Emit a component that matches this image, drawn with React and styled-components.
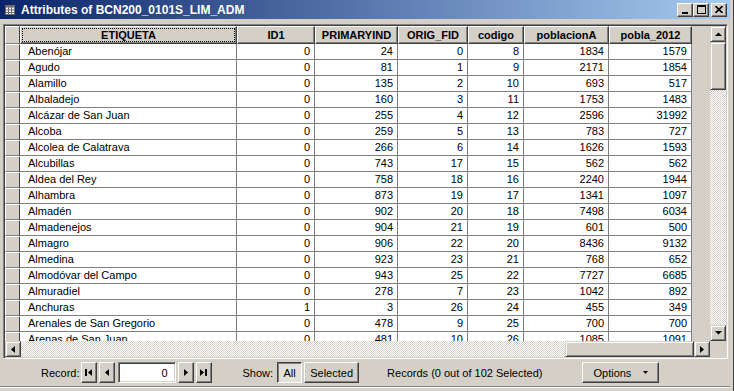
import React from "react"
import styled, { createGlobalStyle } from "styled-components"

const GlobalStyle = createGlobalStyle`
  html, body {
    margin: 0;
    padding: 0;
    background: #d4d0c8;
  }
  body {
    font-family: "Liberation Sans", Arial, sans-serif;
    font-size: 11px;
    color: #000;
  }
`

const columns = [
  { label: "ETIQUETA", width: 217, left: true },
  { label: "ID1", width: 78 },
  { label: "PRIMARYIND", width: 83 },
  { label: "ORIG_FID", width: 70 },
  { label: "codigo", width: 56 },
  { label: "poblacionA", width: 85 },
  { label: "pobla_2012", width: 83 },
]

const rows = [
  ["Abenójar", 0, 24, 0, 8, 1834, 1579],
  ["Agudo", 0, 81, 1, 9, 2171, 1854],
  ["Alamillo", 0, 135, 2, 10, 693, 517],
  ["Albaladejo", 0, 160, 3, 11, 1753, 1483],
  ["Alcázar de San Juan", 0, 255, 4, 12, 2596, 31992],
  ["Alcoba", 0, 259, 5, 13, 783, 727],
  ["Alcolea de Calatrava", 0, 266, 6, 14, 1626, 1593],
  ["Alcubillas", 0, 743, 17, 15, 562, 562],
  ["Aldea del Rey", 0, 758, 18, 16, 2240, 1944],
  ["Alhambra", 0, 873, 19, 17, 1341, 1097],
  ["Almadén", 0, 902, 20, 18, 7498, 6034],
  ["Almadenejos", 0, 904, 21, 19, 601, 500],
  ["Almagro", 0, 906, 22, 20, 8436, 9132],
  ["Almedina", 0, 923, 23, 21, 768, 652],
  ["Almodóvar del Campo", 0, 943, 25, 22, 7727, 6685],
  ["Almuradiel", 0, 278, 7, 23, 1042, 892],
  ["Anchuras", 1, 3, 26, 24, 455, 349],
  ["Arenales de San Gregorio", 0, 478, 9, 25, 700, 700],
  ["Arenas de San Juan", 0, 481, 10, 26, 1085, 1091],
]

const raised = `
  border: 1px solid;
  border-color: #fff #404040 #404040 #fff;
  box-shadow: inset -1px -1px #808080;
`

const Window = styled.div`
  width: 734px;
  height: 391px;
  box-sizing: border-box;
  background: #d4d0c8;
  display: flex;
  flex-direction: column;
  padding-right: 3px;
  border-right: 1px solid #404040;
  overflow: hidden;
`

const TitleBar = styled.div`
  height: 19px;
  flex: none;
  display: flex;
  align-items: center;
  padding: 0 3px 0 5px;
  background: linear-gradient(to right, #0a246a, #a6caf0);
  color: #fff;
  font-weight: bold;
  font-size: 12px;
`

const Title = styled.span`
  margin-left: 6px;
  flex: 1;
  white-space: nowrap;
`

const CaptionButton = styled.div`
  width: 16px;
  height: 14px;
  box-sizing: border-box;
  background: #d4d0c8;
  ${raised}
  display: flex;
  align-items: center;
  justify-content: center;
  margin-left: ${(p) => (p.$gap ? "2px" : "0")};
`

const Frame = styled.div`
  margin: 5px 2px 0 3px;
  height: 335px;
  box-sizing: border-box;
  flex: none;
  border: 1px solid;
  border-color: #808080 #fff #fff #808080;
  padding: 1px;
  box-shadow: inset 1px 1px #404040, inset -1px -1px #d4d0c8;
  display: grid;
  grid-template-columns: 1fr 16px;
  grid-template-rows: 1fr 16px;
`

const Viewport = styled.div`
  overflow: hidden;
  background: #d4d0c8;
`

const Row = styled.div`
  display: flex;
  height: ${(p) => (p.$header ? "18px" : "16px")};
`

const Selector = styled.div`
  width: 15px;
  flex: none;
  box-sizing: border-box;
  background: #d4d0c8;
  border: 1px solid;
  border-color: #fff #808080 #808080 #fff;
  border-right-color: #404040;
`

const HeaderCell = styled.div`
  flex: none;
  box-sizing: border-box;
  background: #d4d0c8;
  ${raised}
  font-weight: bold;
  display: flex;
  align-items: center;
  justify-content: center;
  padding: 1px;
`

const Focus = styled.div`
  width: 100%;
  height: 100%;
  box-sizing: border-box;
  border: 1px dotted #000;
  display: flex;
  align-items: center;
  justify-content: center;
`

const Cell = styled.div`
  flex: none;
  box-sizing: border-box;
  background: #fff;
  border-right: 1px solid #808080;
  border-bottom: 1px solid #808080;
  line-height: 15px;
  white-space: nowrap;
  overflow: hidden;
  text-align: ${(p) => (p.$left ? "left" : "right")};
  padding: ${(p) => (p.$left ? "0 4px 0 8px" : "0 4px")};
`

const VScroll = styled.div`
  display: flex;
  flex-direction: column;
`

const HScroll = styled.div`
  display: flex;
`

const Track = styled.div`
  flex: 1;
  background: repeating-conic-gradient(#fff 0 25%, #d4d0c8 0 50%) 0 0 / 2px 2px;
`

const ScrollButton = styled.div`
  width: 16px;
  height: 16px;
  flex: none;
  box-sizing: border-box;
  background: #d4d0c8;
  border: 1px solid;
  border-color: #d4d0c8 #404040 #404040 #d4d0c8;
  box-shadow: inset 1px 1px #fff, inset -1px -1px #808080;
  display: flex;
  align-items: center;
  justify-content: center;
`

const Thumb = styled(ScrollButton)`
  width: ${(p) => p.$w || 16}px;
  height: ${(p) => p.$h || 16}px;
`

const Corner = styled.div`
  background: #d4d0c8;
`

const Toolbar = styled.div`
  height: 27px;
  flex: none;
  display: flex;
  align-items: center;
  padding-left: 41px;
  border-bottom: 1px solid #808080;
  box-shadow: 0 1px #fff;
  font-size: 11px;
`

const Label = styled.span`
  margin-left: ${(p) => p.$ml || 0}px;
  margin-right: ${(p) => p.$mr || 0}px;
  white-space: nowrap;
`

const Button = styled.div`
  height: 21px;
  width: ${(p) => p.$w}px;
  margin-left: ${(p) => p.$ml || 0}px;
  flex: none;
  box-sizing: border-box;
  background: ${(p) => (p.$pressed ? "#e3e0da" : "#d4d0c8")};
  border: 1px solid;
  border-color: ${(p) =>
    p.$pressed ? "#404040 #fff #fff #404040" : "#fff #404040 #404040 #fff"};
  box-shadow: ${(p) =>
    p.$pressed ? "inset 1px 1px #808080" : "inset -1px -1px #808080"};
  display: flex;
  align-items: center;
  justify-content: center;
  gap: 12px;
  white-space: nowrap;
`

const RecordInput = styled.div`
  width: 58px;
  height: 21px;
  margin-left: 3px;
  flex: none;
  box-sizing: border-box;
  background: #fff;
  border: 1px solid;
  border-color: #808080 #fff #fff #808080;
  box-shadow: inset 1px 1px #404040, inset -1px -1px #d4d0c8;
  display: flex;
  align-items: center;
  justify-content: flex-end;
  padding-right: 7px;
`

const Tri = ({ dir, bar }) => {
  const shapes = {
    up: "M0 4 L3.5 0.5 L7 4 Z",
    down: "M0 0 L7 0 L3.5 3.5 Z",
  }
  if (dir === "up" || dir === "down") {
    return (
      <svg width="7" height="4" viewBox="0 0 7 4">
        <path d={shapes[dir]} fill="#000" />
      </svg>
    )
  }
  const left = dir === "left"
  return (
    <svg width={bar ? 7 : 4} height="7" viewBox={`0 0 ${bar ? 7 : 4} 7`}>
      {left ? (
        <>
          {bar && <rect x="0" y="0" width="2" height="7" fill="#000" />}
          <path d={`M${bar ? 7 : 4} 0 L${bar ? 3 : 0} 3.5 L${bar ? 7 : 4} 7 Z`} fill="#000" />
        </>
      ) : (
        <>
          <path d="M0 0 L4 3.5 L0 7 Z" fill="#000" />
          {bar && <rect x="5" y="0" width="2" height="7" fill="#000" />}
        </>
      )}
    </svg>
  )
}

const TableIcon = () => (
  <svg width="10" height="10" viewBox="0 0 10 10">
    <rect x="0.5" y="0.5" width="9" height="9" fill="#fff" stroke="#6b6b6b" />
    <rect x="0.5" y="0.5" width="9" height="2" fill="#6b6b6b" />
    <path d="M0.5 5 H9.5 M0.5 7.5 H9.5 M3.5 0.5 V9.5 M6.5 0.5 V9.5" stroke="#6b6b6b" strokeWidth="1" />
  </svg>
)

const App = () => {
  return (
    <>
      <GlobalStyle />
      <Window>
        <TitleBar>
          <TableIcon />
          <Title>Attributes of BCN200_0101S_LIM_ADM</Title>
          <CaptionButton>
            <svg width="8" height="8" viewBox="0 0 8 8">
              <rect x="1" y="6" width="6" height="2" fill="#000" />
            </svg>
          </CaptionButton>
          <CaptionButton>
            <svg width="9" height="9" viewBox="0 0 9 9">
              <rect x="0.5" y="0.5" width="8" height="8" fill="none" stroke="#000" />
              <rect x="0" y="0" width="9" height="2" fill="#000" />
            </svg>
          </CaptionButton>
          <CaptionButton $gap>
            <svg width="8" height="7" viewBox="0 0 8 7">
              <path d="M0.5 0 L7.5 7 M7.5 0 L0.5 7" stroke="#000" strokeWidth="1.6" />
            </svg>
          </CaptionButton>
        </TitleBar>

        <Frame>
          <Viewport>
            <Row $header>
              <Selector />
              {columns.map((c, i) => (
                <HeaderCell key={c.label} style={{ width: c.width }}>
                  {i === 0 ? <Focus>{c.label}</Focus> : c.label}
                </HeaderCell>
              ))}
            </Row>
            {rows.map((r) => (
              <Row key={r[0]}>
                <Selector />
                {r.map((v, i) => (
                  <Cell key={i} $left={columns[i].left} style={{ width: columns[i].width }}>
                    {v}
                  </Cell>
                ))}
              </Row>
            ))}
          </Viewport>
          <VScroll>
            <ScrollButton>
              <Tri dir="up" />
            </ScrollButton>
            <Thumb $h={48} />
            <Track />
            <ScrollButton>
              <Tri dir="down" />
            </ScrollButton>
          </VScroll>
          <HScroll>
            <ScrollButton>
              <Tri dir="left" />
            </ScrollButton>
            <Track />
            <Thumb $w={129} />
            <ScrollButton>
              <Tri dir="right" />
            </ScrollButton>
          </HScroll>
          <Corner />
        </Frame>

        <Toolbar>
          <Label $mr={1}>Record:</Label>
          <Button $w={16}>
            <Tri dir="left" bar />
          </Button>
          <Button $w={16} $ml={2}>
            <Tri dir="left" />
          </Button>
          <RecordInput>0</RecordInput>
          <Button $w={16} $ml={2}>
            <Tri dir="right" />
          </Button>
          <Button $w={16} $ml={2}>
            <Tri dir="right" bar />
          </Button>
          <Label $ml={31} $mr={4}>Show:</Label>
          <Button $w={25} $pressed>All</Button>
          <Button $w={55} $ml={2}>Selected</Button>
          <Label $ml={28}>Records (0 out of 102 Selected)</Label>
          <Button $w={77} $ml={40}>
            <span>Options</span>
            <svg width="5" height="3" viewBox="0 0 5 3">
              <path d="M0 0 L5 0 L2.5 3 Z" fill="#000" />
            </svg>
          </Button>
        </Toolbar>
      </Window>
    </>
  )
}

export default App
